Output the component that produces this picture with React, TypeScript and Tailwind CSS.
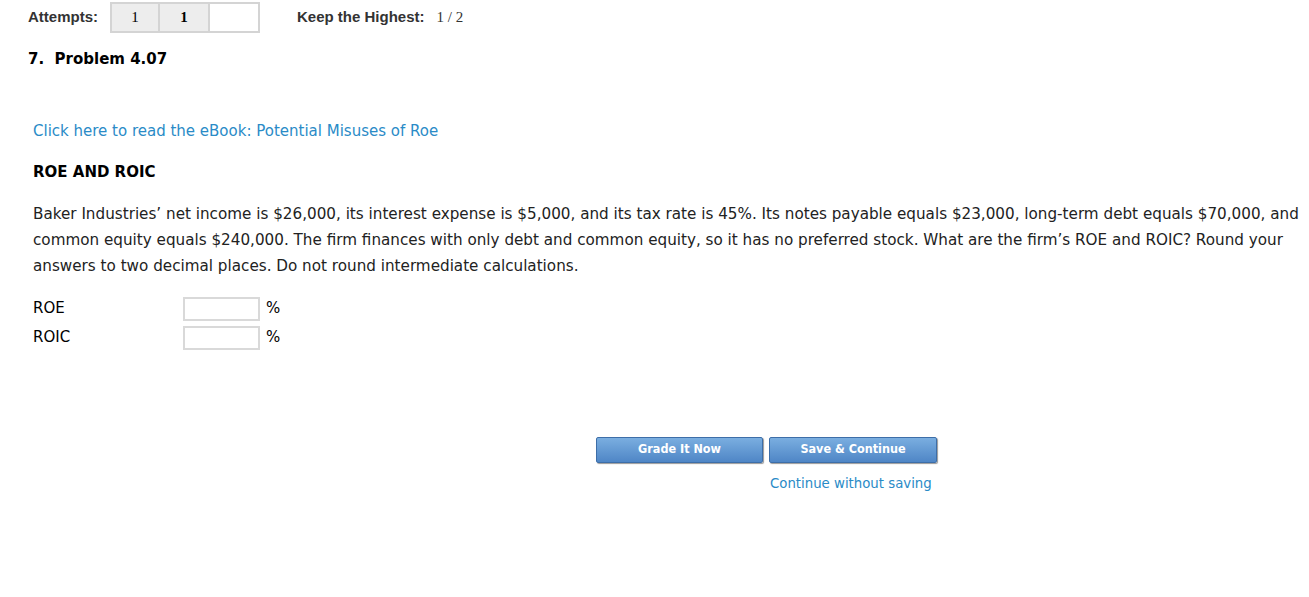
import React from 'react';

const body = "font-['DejaVu_Sans',Verdana,sans-serif]";

export default function App() {
  return (
    <div className="min-h-[597px] bg-white text-black">
      {/* attempts bar */}
      <div className="flex items-center h-[34px] pl-[28px] font-['Liberation_Sans',Arial,sans-serif]">
        <span className="text-[15px] font-bold text-[#333] w-[82px]">Attempts:</span>
        <div className="flex h-[31px] mt-[1px]">
          <div className="w-[50px] bg-[#ededed] border-2 border-[#d4d4d4] flex items-center justify-center font-['Liberation_Serif',serif] text-[15px]">1</div>
          <div className="w-[50px] bg-[#ededed] border-2 border-l-0 border-[#d4d4d4] flex items-center justify-center font-['Liberation_Serif',serif] text-[15px] font-bold">1</div>
          <div className="w-[50px] bg-white border-2 border-l-0 border-[#d4d4d4]"></div>
        </div>
        <span className="ml-[37px] text-[15px] font-bold text-[#333]">Keep the Highest:</span>
        <span className="ml-[12px] text-[15px] font-['Liberation_Serif',serif] text-[#333]">1 / 2</span>
      </div>

      <div className={`${body} pl-[28px] pt-[14px] text-[15px] font-bold`}>7.&nbsp; Problem 4.07</div>

      <div className={`${body} pl-[33px] pr-[6px]`}>
        <a className="block mt-[49px] text-[15px] text-[#2a8bc7]">Click here to read the eBook: Potential Misuses of Roe</a>
        <div className="mt-[19px] text-[15px] font-bold">ROE AND ROIC</div>
        <p className="mt-[17px] text-[15.2px] leading-[26px] text-[#222]">
          Baker Industries’ net income is $26,000, its interest expense is $5,000, and its tax rate is 45%. Its notes payable equals $23,000, long-term debt equals $70,000, and common equity equals $240,000. The firm finances with only debt and common equity, so it has no preferred stock. What are the firm’s ROE and ROIC? Round your answers to two decimal places. Do not round intermediate calculations.
        </p>

        <div className="mt-[18px] flex flex-col gap-[5px] text-[15px]">
          <div className="flex items-center">
            <span className="w-[150px]">ROE</span>
            <div className="w-[77px] h-[24px] border-2 border-[#d9d9d9]"></div>
            <span className="ml-[6px]">%</span>
          </div>
          <div className="flex items-center">
            <span className="w-[150px]">ROIC</span>
            <div className="w-[77px] h-[24px] border-2 border-[#d9d9d9]"></div>
            <span className="ml-[6px]">%</span>
          </div>
        </div>
      </div>

      <div className="flex flex-col items-start pl-[596px] mt-[87px]">
        <div className="flex gap-[6px]">
          <button className="w-[167px] h-[26px] rounded-[2px] border border-[#3d6ea8] bg-gradient-to-b from-[#7aaee0] to-[#4f86c6] text-white text-[12.5px] font-bold font-['DejaVu_Sans_Condensed','DejaVu_Sans',sans-serif] shadow-[1px_1px_1px_#999]">Grade It Now</button>
          <button className="w-[168px] h-[26px] rounded-[2px] border border-[#3d6ea8] bg-gradient-to-b from-[#7aaee0] to-[#4f86c6] text-white text-[12.5px] font-bold font-['DejaVu_Sans_Condensed','DejaVu_Sans',sans-serif] shadow-[1px_1px_1px_#999]">Save &amp; Continue</button>
        </div>
        <a className={`${body} ml-[174px] mt-[11px] text-[13.3px] text-[#2a8bc7]`}>Continue without saving</a>
      </div>
    </div>
  );
}
